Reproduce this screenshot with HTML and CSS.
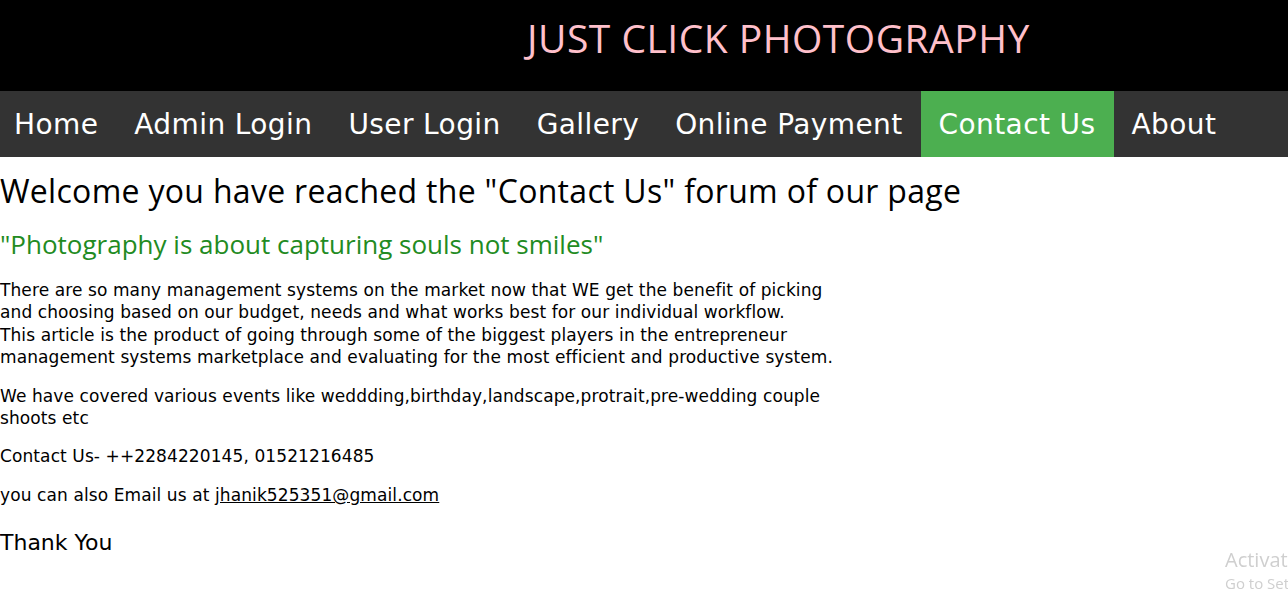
FILE: index.html
```html
<!DOCTYPE html>
<html>
<head>
<meta charset="utf-8">
<link rel="stylesheet" href="styles.css">
</head>
<body>
<header class="top">
  <h1 class="brand">JUST CLICK PHOTOGRAPHY</h1>
</header>
<nav class="nav">
  <a class="nav-item" href="#">Home</a>
  <a class="nav-item" href="#">Admin Login</a>
  <a class="nav-item" href="#">User Login</a>
  <a class="nav-item" href="#">Gallery</a>
  <a class="nav-item" href="#">Online Payment</a>
  <a class="nav-item active" href="#">Contact Us</a>
  <a class="nav-item" href="#">About</a>
</nav>
<main class="content">
  <h2 class="welcome">Welcome you have reached the "Contact Us" forum of our page</h2>
  <h3 class="quote">"Photography is about capturing souls not smiles"</h3>
  <p class="text">There are so many management systems on the market now that WE get the benefit of picking and choosing based on our budget, needs and what works best for our individual workflow.<br>This article is the product of going through some of the biggest players in the entrepreneur management systems marketplace and evaluating for the most efficient and productive system.</p>
  <p class="text">We have covered various events like weddding,birthday,landscape,protrait,pre-wedding couple shoots etc</p>
  <p class="text">Contact Us- ++2284220145, 01521216485</p>
  <p class="text">you can also Email us at <a class="mail" href="#">jhanik525351@gmail.com</a></p>
  <h4 class="thanks">Thank You</h4>
</main>
<div class="watermark">
  <div class="wm-1">Activate Windows</div>
  <div class="wm-2">Go to Settings to activate Windows.</div>
</div>
</body>
</html>
```
FILE: styles.css
```css
html, body {
  margin: 0;
  padding: 0;
  background: #fff;
  overflow: hidden;
}
body {
  font-family: "DejaVu Sans", Verdana, sans-serif;
  color: #000;
}
.top {
  background: #000;
  height: 91px;
  box-sizing: border-box;
  display: flex;
  align-items: flex-start;
  padding: 12px 0 0 527px;
}
.brand {
  margin: 0;
  font-family: "Open Sans", sans-serif;
  font-weight: 400;
  font-size: 39px;
  line-height: 52px;
  letter-spacing: 0.5px;
  color: #ffc0cb;
}
.nav {
  background: #333;
  height: 66px;
  display: flex;
  align-items: stretch;
}
.nav-item {
  display: flex;
  align-items: center;
  padding: 0 18px;
  color: #fff;
  text-decoration: none;
  font-size: 28px;
  letter-spacing: 0.4px;
}
.nav-item:first-child {
  padding-left: 14px;
}
.nav-item.active {
  background: #4caf50;
}
.content {
  padding: 0;
}
.welcome {
  margin: 14px 0 0 0;
  font-family: "Open Sans", sans-serif;
  font-weight: 400;
  font-size: 32px;
  line-height: 40px;
  letter-spacing: 0.3px;
}
.quote {
  margin: 16px 0 0 0;
  font-family: "Open Sans", sans-serif;
  font-weight: 400;
  font-size: 26px;
  line-height: 34px;
  color: #228b22;
}
.text {
  width: 835px;
  font-size: 17px;
  line-height: 22.4px;
  letter-spacing: 0.1px;
  margin: 16px 0 0 0;
}
.quote + .text {
  margin-top: 18px;
}
.mail {
  color: #000;
}
.thanks {
  margin: 24px 0 0 0;
  font-weight: 400;
  font-size: 22px;
}
.watermark {
  position: fixed;
  left: 1225px;
  top: 547px;
  color: #cfcfcf;
  font-family: "Open Sans", sans-serif;
  white-space: nowrap;
}
.wm-1 {
  font-size: 20px;
  line-height: 26px;
}
.wm-2 {
  font-size: 15px;
  line-height: 20px;
}
```
